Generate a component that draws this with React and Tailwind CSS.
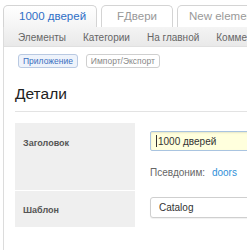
import React from 'react';

const subnav = ['Элементы', 'Категории', 'На главной', 'Комментарии'];

export default function App() {
    return (
        <div className="w-[247px] h-[250px] overflow-hidden bg-white font-['Liberation_Sans',Arial,sans-serif]">
            <div className="flex items-end gap-[4px] pl-[3px] pt-[5px] h-[27px]">
                <div className="w-[94px] h-[22px] shrink-0 rounded-t-[5px] border border-b-0 border-[#d4d4d4] bg-gradient-to-b from-white to-[#f4f4f4] pl-[15px] pt-[5px] text-[11.5px] text-[#2f6fc7] leading-none">
                    1000 дверей
                </div>
                <div className="w-[72px] h-[22px] shrink-0 rounded-t-[5px] border border-b-0 border-[#d4d4d4] bg-white pt-[5px] text-center text-[11.5px] text-[#999] leading-none">
                    FДвери
                </div>
                <div className="w-[100px] h-[22px] shrink-0 rounded-t-[5px] border border-b-0 border-[#d4d4d4] bg-white pl-[11px] pt-[5px] text-[11.5px] text-[#999] leading-none whitespace-nowrap">
                    New element
                </div>
            </div>
            <div className="ml-[3px] border-l border-[#dcdcdc] h-[223px]">
                <div className="h-[20px] flex items-center gap-[17px] pl-[14px] pt-[2px] bg-gradient-to-b from-[#f4f4f4] to-[#e9e9e9] border-b border-[#e0e0e0] text-[10px] text-[#666] whitespace-nowrap">
                    {subnav.map((s) => (
                        <span key={s}>{s}</span>
                    ))}
                </div>
                <div className="flex gap-[8px] pl-[14px] pt-[7px]">
                    <span className="h-[14px] px-[4px] flex items-center rounded-[3px] border border-[#b9c9e2] bg-[#eef3fb] text-[8.5px] text-[#3b6fc0]">Приложение</span>
                    <span className="h-[14px] px-[4px] flex items-center rounded-[3px] border border-[#cfcfcf] bg-white text-[8.5px] text-[#888]">Импорт/Экспорт</span>
                </div>
                <div className="ml-[11px] mt-[16px] pb-[7px] border-b border-[#e3e3e3] text-[15.5px] leading-[20px] text-[#222]">
                    Детали
                </div>
                <div className="ml-[11px] mt-[11px] flex flex-col gap-[1px]">
                    <div className="flex h-[67px]">
                        <div className="w-[120px] shrink-0 bg-[#efefef] pl-[8px] pt-[14px] text-[9px] font-bold text-[#555]">Заголовок</div>
                        <div className="pl-[15px] pt-[8px]">
                            <div className="w-[120px] h-[20px] flex items-center pl-[5px] rounded-[2px] border border-[#a9c4e0] bg-[#ffffdd] shadow-[inset_0_1px_2px_rgba(0,0,0,0.1)] text-[10px] text-[#333]">
                                <span className="w-px h-[12px] bg-[#333] mr-[1px]"></span>1000 дверей
                            </div>
                            <div className="mt-[14px] text-[10px] text-[#666] whitespace-nowrap">
                                Псевдоним: <span className="ml-[4px] text-[#2f8fd8]">doors</span>
                            </div>
                        </div>
                    </div>
                    <div className="flex h-[36px]">
                        <div className="w-[120px] shrink-0 bg-[#efefef] pl-[8px] pt-[13px] text-[9px] font-bold text-[#555]">Шаблон</div>
                        <div className="pl-[15px] pt-[6px]">
                            <div className="w-[120px] h-[21px] flex items-center pl-[8px] rounded-[3px] border border-[#cfcfcf] bg-white shadow-[0_1px_1px_rgba(0,0,0,0.06)] text-[10px] text-[#333]">
                                Catalog
                            </div>
                        </div>
                    </div>
                </div>
            </div>
        </div>
    );
}
